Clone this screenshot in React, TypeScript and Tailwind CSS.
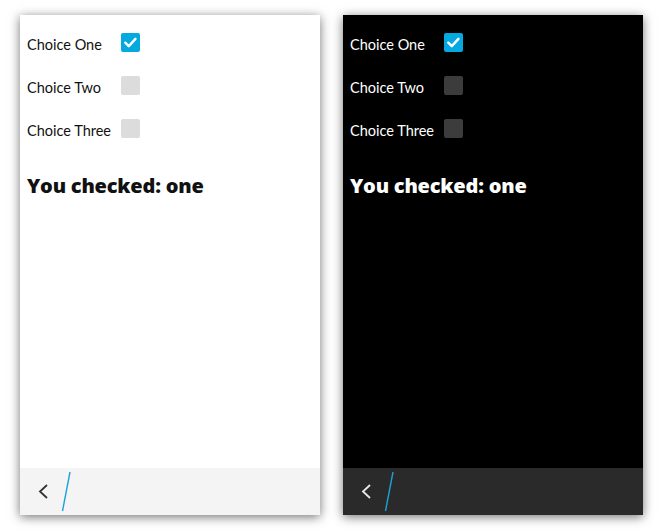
// App.tsx
// Two phone screens (light + dark) showing a checkbox group demo
import { useState } from "react";

type Theme = "light" | "dark";

const choices = [
  { key: "one", label: "Choice One" },
  { key: "two", label: "Choice Two" },
  { key: "three", label: "Choice Three" },
];

function CheckMark() {
  return (
    <svg viewBox="0 0 20 20" className="w-[19px] h-[19px]">
      <path
        d="M4.5 10.2 L8.2 13.8 L15.2 6.2"
        fill="none"
        stroke="white"
        strokeWidth="2.6"
        strokeLinecap="round"
        strokeLinejoin="round"
      />
    </svg>
  );
}

function Screen({ theme }: { theme: Theme }) {
  const [checked, setChecked] = useState<Record<string, boolean>>({
    one: true,
    two: false,
    three: false,
  });
  const dark = theme === "dark";
  const picked = choices.filter((c) => checked[c.key]).map((c) => c.key);

  return (
    <div
      className={`w-[300px] h-[500px] flex flex-col shadow-[0_2px_10px_rgba(0,0,0,0.55)] ${
        dark ? "bg-black text-white" : "bg-white text-[#111]"
      }`}
    >
      <div className="flex-1 flex flex-col pl-[7px] pt-[8px]">
        {choices.map((c) => (
          <div key={c.key} className="flex items-center h-[43px]">
            <span className="w-[94px] text-[14.5px]">{c.label}</span>
            <button
              type="button"
              onClick={() =>
                setChecked((s) => ({ ...s, [c.key]: !s[c.key] }))
              }
              className={`w-[19px] h-[19px] rounded-[2px] flex items-center justify-center -mt-[4px] ${
                checked[c.key]
                  ? "bg-[#03a9df]"
                  : dark
                  ? "bg-[#3c3c3c]"
                  : "bg-[#dcdcdc]"
              }`}
            >
              {checked[c.key] && <CheckMark />}
            </button>
          </div>
        ))}
        <div className="mt-[24px] text-[20px] font-extrabold leading-none tracking-[-0.2px] font-['Open_Sans',sans-serif]">
          You checked: {picked.join(", ")}
        </div>
      </div>
      <div
        className={`h-[47px] flex items-center ${
          dark ? "bg-[#2a2a2a]" : "bg-[#f4f4f4]"
        }`}
      >
        <svg viewBox="0 0 60 47" className="w-[60px] h-[47px]">
          <path
            d="M27 17 L20 23.5 L27 30"
            fill="none"
            stroke={dark ? "#e8e8e8" : "#333"}
            strokeWidth="1.8"
          />
          <path d="M50 4 L42.5 43" stroke="#1aa3d6" strokeWidth="1.4" />
        </svg>
      </div>
    </div>
  );
}

export default function App() {
  return (
    <div
      className="w-[660px] h-[530px] bg-white flex gap-[23px] pl-[20px] pt-[15px]"
      style={{ fontFamily: "Lato, 'Noto Sans', sans-serif" }}
    >
      <Screen theme="light" />
      <Screen theme="dark" />
    </div>
  );
}
